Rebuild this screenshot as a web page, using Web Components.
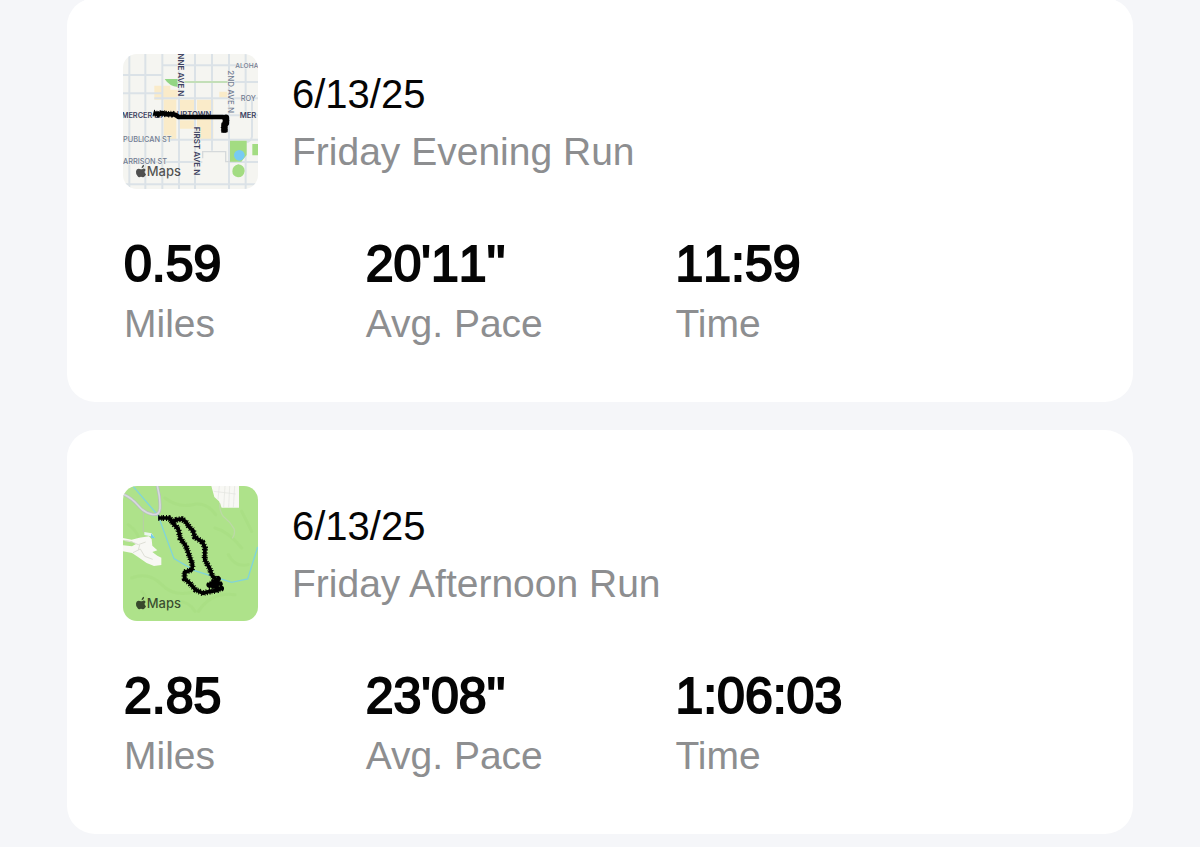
<!DOCTYPE html>
<html lang="en">
<head>
<meta charset="utf-8">
<meta name="viewport" content="width=device-width, initial-scale=1">
<title>Runs</title>
<style>
body { margin: 0; background: #f5f6f9; font-family: "Liberation Sans", Arial, sans-serif; color: #050505; }
</style>
</head>
<body>
<run-list>
  <run-card>
    <map-thumb slot="map">
      <svg viewBox="24 27 405 405" aria-hidden="true">
        <rect x="24" y="27" width="405" height="405" fill="#f5f5f1"/>
        <path d="M118 122h48v12h22v30h-70zM146 165h38v118h-38zM192 164h48v52h-48zM246 164h49v119h-49zM192 226h48v25h-48zM313 140h24v18h-24z" fill="#faebc9"/>
        <path d="M149 102h40v24q-26-2-40-24z" fill="#92d584"/>
        <g fill="none" stroke="#dbe2e7" stroke-width="6">
          <path d="M43 27v405M91 27v405M142 27v405M192 27v405M240 27v405M291 27v290M342 27v405M392 27v178M24 145h118M142 61h287M188 111h241M118 160h311M24 211h405M24 284h405M24 351h238M24 418h405M24 90h118M342 351h87M392 290v142M411 160v115q-2 14-19 17"/>
        </g>
        <path d="M188 111h155" stroke="#c3dfb8" stroke-width="6"/>
        <path d="M263 340v-20h69v30h32" fill="none" stroke="#d5d9db" stroke-width="4"/>
        <path d="M345 287h50v43l-16 20h-34zM412 297h17v34h-17zM370 358q19 3 19 20-3 19-20 19-17-3-17-18 0-16 18-21z" fill="#a3dc82"/>
        <circle cx="373" cy="331" r="16" fill="#77cbf3"/>
        <g font-family="Inter, sans-serif" font-size="20" font-weight="500" fill="#717c92" stroke="#f4f4f0" stroke-width="3" paint-order="stroke">
          <text x="361" y="69">ALOHA</text>
          <text x="377" y="169" font-size="22">ROY</text>
          <text x="24" y="291" font-size="22">PUBLICAN ST</text>
          <text x="24" y="358" font-size="22">ARRISON ST</text>
          <text transform="translate(339 76) rotate(90)" font-size="24">2ND AVE N</text>
          <g fill="#3c4260" font-weight="600">
            <text x="20" y="218" font-size="22">MERCER ST</text>
            <text x="185" y="217" font-size="23">UPTOWN</text>
            <text x="374" y="219" font-size="23">MER</text>
            <text transform="translate(188 25) rotate(90)" font-size="24">NNE AVE N</text>
            <text transform="translate(236 245) rotate(90)" font-size="24">FIRST AVE N</text>
          </g>
        </g>
        <g fill="none" stroke="#000" stroke-linejoin="round">
          <path d="M116 205l14 3 11-4 15 4 16-1 10 3 9 6h133l8 5 2 11-5 10 2 17" stroke-width="14"/>
          <path d="M115 204l15 4 11-4 15 4 16-1 10 3M333 224l-1 8-5 10 1 20" stroke-width="20" stroke-dasharray="3 5 2 3 4 6"/>
          <path d="M333 218v17l-5 5v14" stroke-width="19" stroke-linecap="round"/>
        </g>
      </svg>
    </map-thumb>
    <time slot="date" datetime="2025-06-13">6/13/25</time>
    <span slot="name">Friday Evening Run</span>
    <run-stat label="Miles">0.59</run-stat>
    <run-stat label="Avg. Pace">20'11''</run-stat>
    <run-stat label="Time">11:59</run-stat>
  </run-card>
  <run-card>
    <map-thumb slot="map">
      <svg viewBox="24 24 405 405" aria-hidden="true">
        <rect x="24" y="24" width="405" height="405" fill="#aee28a"/>
        <g fill="none" stroke="#a5dc7e" stroke-width="9" stroke-linecap="round" opacity=".4">
          <path d="M150 60q40 30 82 20t70 30M40 140q40 30 30 60M50 300q50-20 90 20t100 20M250 400q40-60 110-50M340 230q20 40 60 30M300 150q40 10 80 60M80 340q20 20 10 40M190 370q30 0 50 30M380 100l30 60"/>
        </g>
        <path d="M289 24h83v65h-52l-8-19-14-13z" fill="#f8f8f4"/>
        <path d="M313 24l-4 40M330 24l-4 64M344 24l-3 65M359 24l-4 65M296 40l66 8" fill="none" stroke="#e2e4df" stroke-width="2"/>
        <path d="M314 76q0 32 16 44t27 32q5 16-5 29" fill="none" stroke="#bcd9a6" stroke-width="4"/>
        <path d="M24 180l26 5 23-6 29-4 8 9 2 19 15 14-15 5 15 11 12 6v22l-22 3-22-9-26-18-18-12-27-5v-18l27 3 12-7-15-9-24-2z" fill="#f8f8f4"/>
        <path d="M30 188l22 4 18 8 22-8M54 224l22-11 13 22 24 9M74 201l-4 15" fill="none" stroke="#dedfd6" stroke-width="3"/>
        <path d="M85 100v62l25 9" fill="none" stroke="#b9cda9" stroke-width="3"/>
        <path d="M88 162l22 4 10 15-12-6-20-4z" fill="#edf6f1"/>
        <path d="M108 166l13 15-13-1z" fill="#74ccea"/>
        <path d="M55 26l74 86 48 130 62 36 111 35 48-10 30-96" fill="none" stroke="#80d4da" stroke-width="4"/>
        <path d="M24 48q27 12 45 34t43 27q24 4 23-23 1-27-8-62" fill="none" stroke="#b7bcc1" stroke-width="9"/>
        <path d="M24 48q27 12 45 34t43 27q24 4 23-23 1-27-8-62" fill="none" stroke="#d8dade" stroke-width="5"/>
        <g fill="none" stroke="#000" stroke-linejoin="round">
          <path d="M130 120h32l12 12 11-7 15-2 11 7 14 20 9 7 5 20 23 15 8 17-1 36 15 26 7 21 11 13 12 13-31 2 26-17-22 20 31 9-14 6-24 3-15 5-24-11-18-21-14-11-1-20 22-7 3-16-13-35-8-22-16-21-6-29-12-13-9-12" stroke-width="11"/>
          <path d="M130 120h32l12 12 11-7 15-2 11 7 14 20 9 7 5 20 23 15 8 17-1 36 15 26 7 21 11 13 12 13-31 2 26-17-22 20 31 9-14 6-24 3-15 5-24-11-18-21-14-11-1-20 22-7 3-16-13-35-8-22-16-21-6-29-12-13-9-12" stroke-width="18" stroke-dasharray="3 5 2 3 4 6"/>
        </g>
      </svg>
    </map-thumb>
    <time slot="date" datetime="2025-06-13">6/13/25</time>
    <span slot="name">Friday Afternoon Run</span>
    <run-stat label="Miles">2.85</run-stat>
    <run-stat label="Avg. Pace">23'08''</run-stat>
    <run-stat label="Time">1:06:03</run-stat>
  </run-card>
</run-list>

<template id="run-list">
  <style>
    :host { display: flex; flex-direction: column; gap: 28px; margin: -2px 67px 14px; }
  </style>
  <slot></slot>
</template>

<template id="run-card">
  <style>
    :host { display: block; background: #fff; border-radius: 28px; }
    article { padding: 56px 56px 48px; }
    header { display: flex; align-items: center; gap: 34px; }
    .title { display: flex; flex-direction: column; padding-top: 2px; line-height: 57px; }
    .date { font-size: 40px; }
    .name { font-size: 39px; color: #8d8e90; }
    .stats { display: grid; grid-template-columns: 242fr 310fr 402fr; margin-top: 45px; padding-left: 1px; }
  </style>
  <article>
    <header>
      <slot name="map"></slot>
      <div class="title">
        <div class="date"><slot name="date"></slot></div>
        <div class="name"><slot name="name"></slot></div>
      </div>
    </header>
    <div class="stats"><slot></slot></div>
  </article>
</template>

<template id="run-stat">
  <style>
    :host { display: block; white-space: nowrap; }
    .value { font-size: 50px; line-height: 60px; font-kerning: none; -webkit-text-stroke: 2px currentColor; }
    .label { font-size: 39px; line-height: 60px; color: #8d8e90; }
  </style>
  <div class="value"><slot></slot></div>
  <div class="label"></div>
</template>

<template id="map-thumb">
  <style>
    :host { display: grid; flex: none; width: 135px; height: 135px; border-radius: 14px; overflow: hidden; }
    ::slotted(svg), svg { grid-area: 1 / 1; display: block; width: 100%; height: 100%; }
  </style>
  <slot></slot>
  <svg viewBox="24 24 405 405" role="img" aria-label="Apple Maps" fill="#000" fill-opacity=".68">
    <path d="M80 367q-1-8 7-11 1 8-7 11zM78 370q3 0 6-2 5-1 8 4-7 6 1 13-3 8-8 9-2 0-4-1-3-1-6 0-4 2-7-2-6-7-5-14 1-9 8-9 4 0 7 2z"/>
    <text x="95" y="391" font-family="Inter, sans-serif" font-size="39" font-weight="500">Maps</text>
  </svg>
</template>

<script>
class TemplateElement extends HTMLElement {
  constructor() {
    super();
    const template = document.getElementById(this.localName);
    this.attachShadow({ mode: "open" }).append(template.content.cloneNode(true));
  }
}
customElements.define("run-list", class extends TemplateElement {});
customElements.define("run-card", class extends TemplateElement {});
customElements.define("map-thumb", class extends TemplateElement {});
customElements.define("run-stat", class extends TemplateElement {
  connectedCallback() {
    this.shadowRoot.querySelector(".label").textContent = this.getAttribute("label");
  }
});
</script>
</body>
</html>
